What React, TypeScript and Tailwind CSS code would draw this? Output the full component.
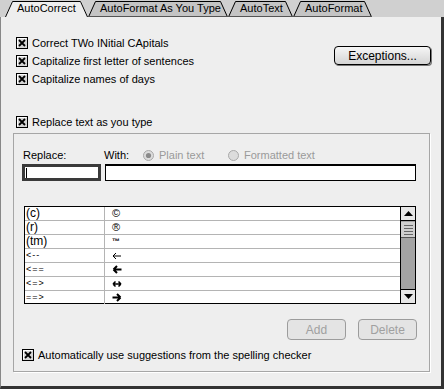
import React from "react";

const tabs = [
  { label: "AutoCorrect", w: 83, active: true },
  { label: "AutoFormat As You Type", w: 140, active: false },
  { label: "AutoText", w: 65, active: false },
  { label: "AutoFormat", w: 79, active: false },
];

function Tab({ label, w, active }: { label: string; w: number; active: boolean }) {
  return (
    <div className="relative shrink-0 h-[17px]" style={{ width: w }}>
      <svg className="absolute inset-0" width={w} height={17} viewBox={`0 0 ${w} 17`}>
        <polygon
          points={`0,17 7,1 ${w - 7},1 ${w},17`}
          fill={active ? "#eeeeee" : "#c4c4c4"}
        />
        <polyline
          points={`0.5,17 7.5,1.5 ${w - 7.5},1.5 ${w - 0.5},17`}
          fill="none"
          stroke="#000"
          strokeWidth="1"
        />
        {!active && <line x1="0" y1="16.5" x2={w} y2="16.5" stroke="#555" />}
      </svg>
      <span className="relative block pl-[12px] pt-[2px] text-[11px] leading-[13px] text-black">{label}</span>
    </div>
  );
}

function Check({ label, className = "" }: { label: string; className?: string }) {
  return (
    <div className={`flex items-center gap-[4px] h-[18px] ${className}`}>
      <svg width="12" height="12" viewBox="0 0 12 12" className="shrink-0">
        <rect x="0.5" y="0.5" width="11" height="11" fill="#d6d6d6" stroke="#000" />
        <path d="M1.5 10.5V1.5H10.5" stroke="#fff" fill="none" />
        <path d="M3 3L9 9M9 3L3 9" stroke="#000" strokeWidth="1.8" />
      </svg>
      <span className="text-[11px] leading-[13px] text-black">{label}</span>
    </div>
  );
}

function Radio({ label, on }: { label: string; on: boolean }) {
  return (
    <div className="flex items-center gap-[5px]">
      <svg width="11" height="11" viewBox="0 0 11 11">
        <circle cx="5.5" cy="5.5" r="5" fill="#dcdcdc" stroke="#a8a8a8" />
        {on && <circle cx="5.5" cy="5.5" r="2.6" fill="#8a8a8a" />}
      </svg>
      <span className="text-[11px] leading-[13px] text-[#9a9a9a]">{label}</span>
    </div>
  );
}

const rows: { k: string; big: boolean; v: React.ReactNode }[] = [
  { k: "(c)", big: true, v: <span className="text-[11px]">©</span> },
  { k: "(r)", big: true, v: <span className="text-[11px]">®</span> },
  { k: "(tm)", big: true, v: <span className="text-[8px] font-bold">™</span> },
  {
    k: "<--",
    big: false,
    v: (
      <svg width="10" height="8" viewBox="0 0 10 8">
        <path d="M1 4H9M1 4L4 1M1 4L4 7" stroke="#000" fill="none" />
      </svg>
    ),
  },
  {
    k: "<==",
    big: false,
    v: (
      <svg width="10" height="9" viewBox="0 0 10 9">
        <path d="M1.5 4.5H9.5M1.5 4.5L5 1M1.5 4.5L5 8" stroke="#000" strokeWidth="2" fill="none" />
      </svg>
    ),
  },
  {
    k: "<=>",
    big: false,
    v: (
      <svg width="10" height="8" viewBox="0 0 10 8">
        <path d="M1 4H9M1 4L3.5 1.5M1 4L3.5 6.5M9 4L6.5 1.5M9 4L6.5 6.5" stroke="#000" strokeWidth="1.5" fill="none" />
      </svg>
    ),
  },
  {
    k: "==>",
    big: false,
    v: (
      <svg width="10" height="9" viewBox="0 0 10 9">
        <path d="M0.5 4.5H8.5M8.5 4.5L5 1M8.5 4.5L5 8" stroke="#000" strokeWidth="2" fill="none" />
      </svg>
    ),
  },
];

export default function App() {
  return (
    <div className="w-[444px] h-[389px] flex flex-col bg-[#d0d0d0] font-['Liberation_Sans',Arial,sans-serif] overflow-hidden">
      <div className="flex h-[17px] pl-[5px] shrink-0">
        {tabs.map((t) => (
          <Tab key={t.label} {...t} />
        ))}
      </div>

      <div className="flex-1 flex flex-col bg-[#eeeeee] border-l border-l-[#888] border-r-[3px] border-r-[#333] border-b-[3px] border-b-[#333] pt-[17px] pl-[15px]">
        <div className="flex justify-between pr-[10px]">
          <div className="flex flex-col">
            <Check label="Correct TWo INitial CApitals" />
            <Check label="Capitalize first letter of sentences" />
            <Check label="Capitalize names of days" />
          </div>
          <button className="mt-[12px] w-[97px] h-[19px] rounded-[4px] border border-black bg-gradient-to-b from-[#f6f6f6] to-[#d4d4d4] shadow-[1px_1px_0_#777] text-[12px] leading-[14px] text-black">
            Exceptions...
          </button>
        </div>

        <Check label="Replace text as you type" className="mt-[25px]" />

        <div className="mt-[2px] mr-[11px] ml-[-3px] h-[239px] border border-[#a6a6a6] shadow-[1px_1px_0_#fff] pl-[8px] pr-[13px] flex flex-col">
          <div className="flex items-center h-[16px] mt-[13px]">
            <span className="w-[82px] pl-[1px] text-[11px] leading-[13px] text-black">Replace:</span>
            <span className="w-[39px] text-[11px] leading-[13px] text-black">With:</span>
            <div className="w-[85px]">
              <Radio label="Plain text" on />
            </div>
            <Radio label="Formatted text" on={false} />
          </div>

          <div className="flex gap-[4px] mt-[1px] h-[17px]">
            <div className="w-[79px] h-[17px] border-[3px] border-[#3a3a3a] bg-white flex items-center pl-[1px]">
              <div className="w-px h-[10px] bg-black" />
            </div>
            <div className="flex-1 h-[17px] border border-black border-t-2 bg-white" />
          </div>

          <div className="mt-[25px] ml-[2px] h-[98px] border border-black bg-white flex">
            <div className="flex-1 flex flex-col">
              {rows.map((r) => (
                <div key={r.k} className="flex h-[14px] border-b border-[#b4b4b4] last:border-b-0">
                  <div
                    className={`w-[80px] border-r border-[#b4b4b4] pl-[1px] leading-[13px] text-black ${
                      r.big ? "text-[12px]" : "text-[9px] tracking-[1px]"
                    }`}
                  >
                    {r.k}
                  </div>
                  <div className="flex-1 pl-[7px] flex items-center leading-[13px] text-black">{r.v}</div>
                </div>
              ))}
            </div>
            <div className="w-[15px] border-l border-black flex flex-col bg-[#a4a4a4]">
              <div className="h-[14px] bg-[#e6e6e6] border-b border-black flex items-center justify-center">
                <svg width="9" height="5" viewBox="0 0 9 5">
                  <polygon points="4.5,0 9,5 0,5" fill="#000" />
                </svg>
              </div>
              <div className="h-[16px] mt-[1px] bg-[#cfcfcf] border-b border-[#555] flex flex-col items-center justify-center gap-[2px]">
                <div className="w-[9px] h-px bg-[#666]" />
                <div className="w-[9px] h-px bg-[#666]" />
                <div className="w-[9px] h-px bg-[#666]" />
                <div className="w-[9px] h-px bg-[#666]" />
              </div>
              <div className="flex-1" />
              <div className="h-[14px] bg-[#e6e6e6] border-t border-black flex items-center justify-center">
                <svg width="9" height="5" viewBox="0 0 9 5">
                  <polygon points="0,0 9,0 4.5,5" fill="#000" />
                </svg>
              </div>
            </div>
          </div>

          <div className="flex justify-end gap-[12px] mt-[15px] mr-[-1px]">
            <button className="w-[59px] h-[21px] rounded-[4px] border border-[#9c9c9c] bg-[#e4e4e4] text-[12px] leading-[14px] text-[#a0a0a0]">
              Add
            </button>
            <button className="w-[59px] h-[21px] rounded-[4px] border border-[#9c9c9c] bg-[#e4e4e4] text-[12px] leading-[14px] text-[#a0a0a0]">
              Delete
            </button>
          </div>

          <Check label="Automatically use suggestions from the spelling checker" className="mt-[6px]" />
        </div>
      </div>
    </div>
  );
}
